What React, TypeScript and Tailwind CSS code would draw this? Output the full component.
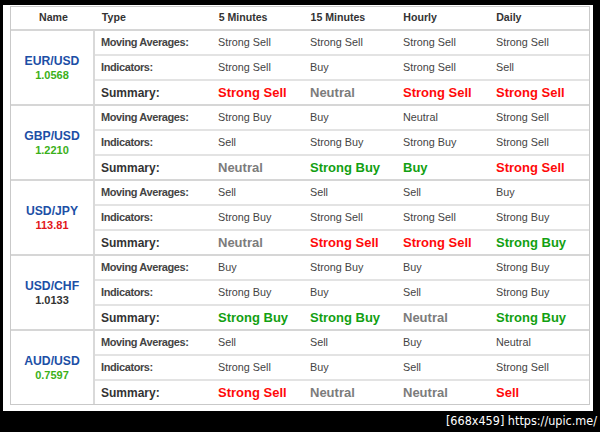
import React from "react"

type Tone = "sell" | "buy" | "neutral"

const pairs = [
  {
    name: "EUR/USD",
    price: "1.0568",
    priceColor: "text-[#3bb019]",
    ma: ["Strong Sell", "Strong Sell", "Strong Sell", "Strong Sell"],
    ind: ["Strong Sell", "Buy", "Strong Sell", "Sell"],
    sum: ["Strong Sell", "Neutral", "Strong Sell", "Strong Sell"],
  },
  {
    name: "GBP/USD",
    price: "1.2210",
    priceColor: "text-[#3bb019]",
    ma: ["Strong Buy", "Buy", "Neutral", "Strong Sell"],
    ind: ["Sell", "Strong Buy", "Strong Buy", "Strong Sell"],
    sum: ["Neutral", "Strong Buy", "Buy", "Strong Sell"],
  },
  {
    name: "USD/JPY",
    price: "113.81",
    priceColor: "text-[#e2161b]",
    ma: ["Sell", "Sell", "Sell", "Buy"],
    ind: ["Strong Buy", "Strong Sell", "Strong Sell", "Strong Buy"],
    sum: ["Neutral", "Strong Sell", "Strong Sell", "Strong Buy"],
  },
  {
    name: "USD/CHF",
    price: "1.0133",
    priceColor: "text-[#333333]",
    ma: ["Buy", "Strong Buy", "Buy", "Strong Buy"],
    ind: ["Strong Buy", "Buy", "Sell", "Strong Buy"],
    sum: ["Strong Buy", "Strong Buy", "Neutral", "Strong Buy"],
  },
  {
    name: "AUD/USD",
    price: "0.7597",
    priceColor: "text-[#3bb019]",
    ma: ["Sell", "Sell", "Buy", "Neutral"],
    ind: ["Strong Sell", "Buy", "Sell", "Strong Sell"],
    sum: ["Strong Sell", "Neutral", "Neutral", "Sell"],
  },
]

function tone(v: string): Tone {
  if (v.includes("Sell")) return "sell"
  if (v.includes("Buy")) return "buy"
  return "neutral"
}

const summaryColor: Record<Tone, string> = {
  sell: "text-[#ff0a0a]",
  buy: "text-[#12a012]",
  neutral: "text-[#7c7c7c]",
}

const cols = ["w-[117px]", "w-[92px]", "w-[93px]", "w-[93px]", "w-[99px]"]

function Row({ label, values, summary }: { label: string; values: string[]; summary?: boolean }) {
  return (
    <div className={`flex items-center ${summary ? "h-[23px]" : "h-[25px] border-b-2 border-[#e3e3e3]"}`}>
      <div
        className={`${cols[0]} pl-[6px] font-bold ${
          summary ? "text-[12px] text-[#333]" : "text-[11px] tracking-[-0.4px] text-[#444]"
        }`}
      >
        {label}
      </div>
      {values.map((v, i) => (
        <div
          key={i}
          className={`${cols[i + 1]} pl-[6px] ${
            summary
              ? `text-[13px] font-bold ${summaryColor[tone(v)]}`
              : "text-[10.8px] text-[#444]"
          }`}
        >
          {v}
        </div>
      ))}
    </div>
  )
}

export default function App() {
  return (
    <div
      className="w-[600px] h-[432px] bg-black flex flex-col"
      style={{ fontFamily: '"Liberation Sans", Arial, sans-serif' }}
    >
      <div className="mt-[5px] ml-[3px] w-[590px] h-[406px] bg-white pl-[7px] pt-[1px]">
        <div className="w-[580px] border border-[#c9c9c9]">
          {/* header */}
          <div className="flex h-[24px] items-center border-b-2 border-[#d6d6d6] text-[10.6px] font-bold text-[#333]">
            <div className="w-[85px] text-center">Name</div>
            <div className={`${cols[0]} pl-[6px]`}>Type</div>
            <div className={`${cols[1]} pl-[6px]`}>5 Minutes</div>
            <div className={`${cols[2]} pl-[6px]`}>15 Minutes</div>
            <div className={`${cols[3]} pl-[6px]`}>Hourly</div>
            <div className={`${cols[4]} pl-[6px]`}>Daily</div>
          </div>

          {pairs.map((p, idx) => (
            <div
              key={p.name}
              className={`flex ${idx < pairs.length - 1 ? "border-b-2 border-[#d6d6d6]" : "h-[73px]"}`}
            >
              <div className="w-[85px] border-r-2 border-[#d9d9d9] flex flex-col items-center justify-center font-bold leading-[14px]">
                <span className="text-[12.2px] text-[#1c4fa6]">{p.name}</span>
                <span className={`text-[11px] ${p.priceColor}`}>{p.price}</span>
              </div>
              <div className="flex-1">
                <Row label="Moving Averages:" values={p.ma} />
                <Row label="Indicators:" values={p.ind} />
                <Row label="Summary:" values={p.sum} summary />
              </div>
            </div>
          ))}
        </div>
      </div>
      <div className="flex-1 flex items-center justify-end pr-[3px] text-white text-[12.5px]" style={{ fontFamily: '"DejaVu Sans Condensed", "DejaVu Sans", sans-serif' }}>
        [668x459] https://upic.me/
      </div>
    </div>
  )
}
